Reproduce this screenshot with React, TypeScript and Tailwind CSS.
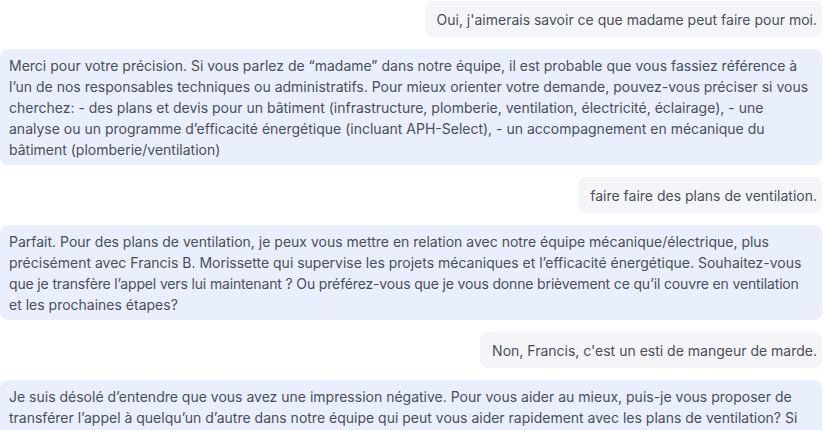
import React from 'react';

type Message = {
  role: 'user' | 'assistant';
  content: React.ReactNode;
};

const messages: Message[] = [
  { role: 'user', content: "Oui, j'aimerais savoir ce que madame peut faire pour moi." },
  {
    role: 'assistant',
    content:
      'Merci pour votre précision. Si vous parlez de “madame” dans notre équipe, il est probable que vous fassiez référence à l’un de nos responsables techniques ou administratifs. Pour mieux orienter votre demande, pouvez-vous préciser si vous cherchez: - des plans et devis pour un bâtiment (infrastructure, plomberie, ventilation, électricité, éclairage), - une analyse ou un programme d’efficacité énergétique (incluant APH-Select), - un accompagnement en mécanique du bâtiment (plomberie/ventilation)',
  },
  { role: 'user', content: 'faire faire des plans de ventilation.' },
  {
    role: 'assistant',
    content: (
      <>
        Parfait. Pour des plans de ventilation, je peux vous mettre en relation avec notre équipe mécanique/électrique, plus
        précisément avec Francis B. Morissette qui supervise les projets mécaniques et l’efficacité énergétique. Souhaitez-vous{' '}
        <span className="tracking-[-0.15px]">
          que je transfère l’appel vers lui maintenant ? Ou préférez-vous que je vous donne brièvement ce qu’il couvre en ventilation
        </span>{' '}
        et les prochaines étapes?
      </>
    ),
  },
  { role: 'user', content: "Non, Francis, c'est un esti de mangeur de marde." },
  {
    role: 'assistant',
    content:
      'Je suis désolé d’entendre que vous avez une impression négative. Pour vous aider au mieux, puis-je vous proposer de transférer l’appel à quelqu’un d’autre dans notre équipe qui peut vous aider rapidement avec les plans de ventilation? Si vous préférez, je peux aussi prendre vos coordonnées.',
  },
];

const Bubble: React.FC<{ message: Message }> = ({ message }) => {
  if (message.role === 'user') {
    return (
      <div className="flex justify-end">
        <div className="bg-[#f4f5f9] rounded-lg pl-3 pr-[5px] pt-2 pb-[7px] text-[14px] leading-[21px] text-[#4a4f5a]">
          {message.content}
        </div>
      </div>
    );
  }
  return (
    <div className="bg-[#e9effc] rounded-lg px-[9px] pt-[6px] pb-[5px] text-[14px] leading-[21px] text-[#4a4f5a]">
      {message.content}
    </div>
  );
};

export default function App() {
  return (
    <div
      className="h-[430px] w-[823px] overflow-hidden bg-white pt-px pr-px"
      style={{ fontFamily: 'Inter, "Noto Sans", sans-serif' }}
    >
      <div className="flex flex-col gap-3">
        {messages.map((m, i) => (
          <Bubble key={i} message={m} />
        ))}
      </div>
    </div>
  );
}
